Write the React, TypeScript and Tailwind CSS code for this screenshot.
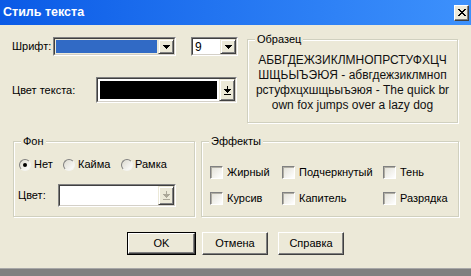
import React from "react";

function DownArrow({ color = "#000" }: { color?: string }) {
  return (
    <svg width="7" height="4" viewBox="0 0 7 4" shapeRendering="crispEdges">
      <rect x="0" y="0" width="7" height="1" fill={color} />
      <rect x="1" y="1" width="5" height="1" fill={color} />
      <rect x="2" y="2" width="3" height="1" fill={color} />
      <rect x="3" y="3" width="1" height="1" fill={color} />
    </svg>
  );
}

function BarArrow({ color = "#000" }: { color?: string }) {
  return (
    <svg width="7" height="9" viewBox="0 0 7 9" shapeRendering="crispEdges">
      <rect x="3" y="0" width="1" height="3" fill={color} />
      <rect x="0" y="3" width="7" height="1" fill={color} />
      <rect x="1" y="4" width="5" height="1" fill={color} />
      <rect x="2" y="5" width="3" height="1" fill={color} />
      <rect x="3" y="6" width="1" height="1" fill={color} />
      <rect x="0" y="8" width="7" height="1" fill={color} />
    </svg>
  );
}

function DropButton({ children, w = "w-[16px]" }: { children: React.ReactNode; w?: string }) {
  return (
    <div
      className={
        "h-full shrink-0 flex items-center justify-center bg-[#ece9d8] border border-t-[#ece9d8] border-l-[#ece9d8] border-r-[#404040] border-b-[#404040] shadow-[inset_1px_1px_0_#fff,inset_-1px_-1px_0_#808080] " +
        w
      }
    >
      {children}
    </div>
  );
}

function Sunken({ className, children }: { className: string; children: React.ReactNode }) {
  return (
    <div
      className={
        "shrink-0 border border-t-[#808080] border-l-[#808080] border-b-white border-r-white " + className
      }
    >
      <div className="h-full w-full flex border border-t-[#404040] border-l-[#404040] border-b-[#d4d0c8] border-r-[#d4d0c8]">
        {children}
      </div>
    </div>
  );
}

function Group({
  label,
  className,
  children,
}: {
  label: string;
  className: string;
  children?: React.ReactNode;
}) {
  return (
    <div
      className={
        "relative shrink-0 border border-[#d0d0bf] shadow-[inset_1px_1px_0_#fff,1px_1px_0_#fff] " + className
      }
    >
      <span className="absolute -top-[7px] left-[7px] bg-[#ece9d8] px-[2px] leading-[13px]">{label}</span>
      {children}
    </div>
  );
}

function Radio({ checked }: { checked?: boolean }) {
  return (
    <div className="w-[12px] h-[12px] shrink-0 rounded-full border border-t-[#808080] border-l-[#808080] border-b-[#f4f4f0] border-r-[#f4f4f0] bg-linear-to-br from-[#dcdad0] to-white flex items-center justify-center">
      {checked && <div className="w-[4px] h-[4px] rounded-full bg-black" />}
    </div>
  );
}

function Check() {
  return (
    <div className="w-[13px] h-[13px] shrink-0 border border-t-[#808080] border-l-[#808080] border-b-white border-r-white shadow-[inset_1px_1px_0_#b0aea4] bg-linear-to-br from-[#e2e0d6] to-white" />
  );
}

function Btn({ label, w, def }: { label: string; w: string; def?: boolean }) {
  return (
    <div className={"h-[23px] shrink-0 " + w + (def ? " border border-black" : "")}>
      <div className="h-full w-full flex items-center justify-center bg-[#ece9d8] border border-t-white border-l-white border-r-[#404040] border-b-[#404040] shadow-[inset_-1px_-1px_0_#808080]">
        {label}
      </div>
    </div>
  );
}

export default function App() {
  return (
    <div className="w-[471px] h-[276px] flex flex-col overflow-hidden font-['Liberation_Sans',Arial,sans-serif] text-[11px] text-black">
      <div className="h-[25px] shrink-0 flex items-center justify-between pl-[3px] pr-[2px] bg-linear-to-r from-[#0a5ae6] to-[#3d91fc]">
        <span className="text-white font-bold text-[12.5px] leading-none">Стиль текста</span>
        <div className="w-[15px] h-[16px] flex items-center justify-center bg-[#ece9d8] border border-t-white border-l-white border-r-[#404040] border-b-[#404040] shadow-[inset_-1px_-1px_0_#808080]">
          <svg width="8" height="7" viewBox="0 0 8 7" shapeRendering="crispEdges">
            <path d="M0 0h2v1h-2zM6 0h2v1h-2zM1 1h2v1h-2zM5 1h2v1h-2zM2 2h4v1h-4zM3 3h2v1h-2zM2 4h4v1h-4zM1 5h2v1h-2zM5 5h2v1h-2zM0 6h2v1h-2zM6 6h2v1h-2z" fill="#000" />
          </svg>
        </div>
      </div>

      <div className="flex-1 bg-[#ece9d8] flex flex-col">
        <div className="pt-[12px] flex items-start">
          <div className="ml-[12px] w-[226px] flex flex-col">
            <div className="flex items-center h-[19px]">
              <span className="w-[41px] shrink-0 whitespace-nowrap">Шрифт:</span>
              <Sunken className="w-[123px] h-[19px]">
                <div className="flex-1 bg-[#316ac5] m-[1px]" />
                <DropButton>
                  <DownArrow />
                </DropButton>
              </Sunken>
              <Sunken className="ml-[15px] w-[47px] h-[19px]">
                <div className="flex-1 bg-white flex items-center pl-[2px] leading-none text-[12px]">9</div>
                <DropButton>
                  <DownArrow />
                </DropButton>
              </Sunken>
            </div>
            <div className="flex items-center mt-[21px]">
              <span className="w-[84px] shrink-0">Цвет текста:</span>
              <Sunken className="w-[141px] h-[26px]">
                <div className="flex-1 bg-white p-[2px]">
                  <div className="h-full bg-black" />
                </div>
                <DropButton>
                  <BarArrow />
                </DropButton>
              </Sunken>
            </div>
          </div>

          <Group label="Образец" className="ml-[9px] mt-[2px] w-[211px] h-[84px]">
            <div className="pt-[13px] text-center text-[12px] leading-[15px] text-[#111]">
              <div>АБВГДЕЖЗИКЛМНОПРСТУФХЦЧ</div>
              <div>ШЩЬЫЪЭЮЯ - абвгдежзиклмноп</div>
              <div>рстуфхцхшщьыъэюя - The quick br</div>
              <div>own fox jumps over a lazy dog</div>
            </div>
          </Group>
        </div>

        <div className="flex mt-[18px] ml-[13px]">
          <Group label="Фон" className="w-[182px] h-[76px]">
            <div className="flex items-center h-[13px] mt-[16px] pl-[5px]">
              <div className="w-[44px] flex items-center gap-[3px]">
                <Radio checked />
                <span>Нет</span>
              </div>
              <div className="w-[58px] flex items-center gap-[3px]">
                <Radio />
                <span>Кайма</span>
              </div>
              <div className="flex items-center gap-[2px]">
                <Radio />
                <span>Рамка</span>
              </div>
            </div>
            <div className="flex items-center mt-[13px] pl-[4px]">
              <span className="w-[40px] shrink-0">Цвет:</span>
              <Sunken className="w-[118px] h-[23px]">
                <div className="flex-1 bg-white" />
                <DropButton>
                  <BarArrow color="#aca899" />
                </DropButton>
              </Sunken>
            </div>
          </Group>

          <Group label="Эффекты" className="ml-[6px] w-[258px] h-[76px]">
            <div className="grid grid-cols-[72px_101px_1fr] gap-y-[13px] pt-[24px] pl-[8px]">
              <div className="flex items-center gap-[4px] h-[13px]">
                <Check />
                <span>Жирный</span>
              </div>
              <div className="flex items-center gap-[4px] h-[13px]">
                <Check />
                <span>Подчеркнутый</span>
              </div>
              <div className="flex items-center gap-[4px] h-[13px]">
                <Check />
                <span>Тень</span>
              </div>
              <div className="flex items-center gap-[4px] h-[13px]">
                <Check />
                <span>Курсив</span>
              </div>
              <div className="flex items-center gap-[4px] h-[13px]">
                <Check />
                <span>Капитель</span>
              </div>
              <div className="flex items-center gap-[4px] h-[13px]">
                <Check />
                <span>Разрядка</span>
              </div>
            </div>
          </Group>
        </div>

        <div className="flex mt-[15px] ml-[127px]">
          <Btn label="OK" w="w-[69px]" def />
          <div className="ml-[6px]">
            <Btn label="Отмена" w="w-[66px]" />
          </div>
          <div className="ml-[10px]">
            <Btn label="Справка" w="w-[66px]" />
          </div>
        </div>
      </div>

      <div className="h-[8px] shrink-0 bg-[#808080] border-t border-[#a8a8a8]" />
    </div>
  );
}
